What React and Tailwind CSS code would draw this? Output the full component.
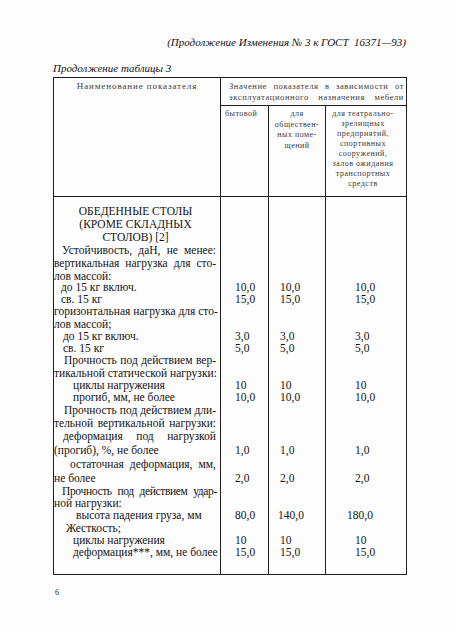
import React from "react";

const rows = [
  { t: "ОБЕДЕННЫЕ СТОЛЫ", h: "h-[13px]", c: "text-center pr-[3px]" },
  { t: "(КРОМЕ СКЛАДНЫХ", h: "h-[13px]", c: "text-center pr-[3px]" },
  { t: "СТОЛОВ) [2]", h: "h-[13px]", c: "text-center pr-[3px]" },
  { t: "Устойчивость, даН, не менее:", h: "h-[13px]", c: "pl-[8px] pr-[4px] text-justify [text-align-last:justify]" },
  { t: "вертикальная нагрузка для сто-", h: "h-[13px]", c: "pl-[0px] pr-[4px] text-justify [text-align-last:justify]" },
  { t: "лов массой:", h: "h-[12px]", c: "pl-[0px]" },
  { t: "до 15 кг включ.", h: "h-[11px]", c: "pl-[7px]", v: ["10,0", "10,0", "10,0"] },
  { t: "св. 15 кг", h: "h-[12px]", c: "pl-[7px]", v: ["15,0", "15,0", "15,0"] },
  { t: "горизонтальная нагрузка для сто-", h: "h-[13px]", c: "pl-[0px] pr-[4px] text-justify [text-align-last:justify]" },
  { t: "лов массой;", h: "h-[12px]", c: "pl-[0px]" },
  { t: "до 15 кг включ.", h: "h-[12px]", c: "pl-[9px]", v: ["3,0", "3,0", "3,0"] },
  { t: "св. 15 кг", h: "h-[12px]", c: "pl-[9px]", v: ["5,0", "5,0", "5,0"] },
  { t: "Прочность под действием вер-", h: "h-[13px]", c: "pl-[10px] pr-[4px] text-justify [text-align-last:justify]" },
  { t: "тикальной статической нагрузки:", h: "h-[12px]", c: "pl-[0px] pr-[4px] text-justify [text-align-last:justify]" },
  { t: "циклы нагружения", h: "h-[12px]", c: "pl-[19px]", v: ["10", "10", "10"] },
  { t: "прогиб, мм, не более", h: "h-[13px]", c: "pl-[19px] pr-[48px] text-justify [text-align-last:justify]", v: ["10,0", "10,0", "10,0"] },
  { t: "Прочность под действием дли-", h: "h-[13px]", c: "pl-[10px] pr-[4px] text-justify [text-align-last:justify]" },
  { t: "тельной вертикальной нагрузки:", h: "h-[13px]", c: "pl-[0px] pr-[4px] text-justify [text-align-last:justify]" },
  { t: "деформация под нагрузкой", h: "h-[13px]", c: "pl-[9px] pr-[4px] text-justify [text-align-last:justify]" },
  { t: "(прогиб), %, не более", h: "h-[14px]", c: "pl-[0px]", v: ["1,0", "1,0", "1,0"] },
  { t: "остаточная деформация, мм,", h: "h-[14px]", c: "pl-[16px] pr-[4px] text-justify [text-align-last:justify]" },
  { t: "не более", h: "h-[14px]", c: "pl-[0px]", v: ["2,0", "2,0", "2,0"] },
  { t: "Прочность под действием удар-", h: "h-[12px]", c: "pl-[8px] pr-[3px] tracking-[-0.35px] text-justify [text-align-last:justify]" },
  { t: "ной нагрузки:", h: "h-[12px]", c: "pl-[0px]" },
  { t: "высота падения груза, мм", h: "h-[13px]", c: "pl-[22px]", v: ["80,0", "140,0", "180,0"], wide: true },
  { t: "Жесткость;", h: "h-[12px]", c: "pl-[12px]" },
  { t: "циклы нагружения", h: "h-[12px]", c: "pl-[19px]", v: ["10", "10", "10"] },
  { t: "деформация***, мм, не более", h: "h-[12px]", c: "pl-[19px] pr-[3px] text-justify [text-align-last:justify]", v: ["15,0", "15,0", "15,0"] },
];

function Row({ r }) {
  const v = r.v || ["", "", ""];
  return (
    <div className={`grid grid-cols-[167px_48px_57px_80px] leading-[11px] ${r.h}`}>
      <div className="flex items-center border-r border-[#1e1e1e]">
        <div className={`w-full whitespace-nowrap ${r.c}`}>{r.t}</div>
      </div>
      <div className="flex items-center border-r border-[#1e1e1e] pl-[14px]">{v[0]}</div>
      <div className={`flex items-center border-r border-[#1e1e1e] ${r.wide ? "pl-[9px]" : "pl-[11px]"}`}>{v[1]}</div>
      <div className={`flex items-center ${r.wide ? "pl-[21px]" : "pl-[29px]"}`}>{v[2]}</div>
    </div>
  );
}

export default function App() {
  return (
    <div className="w-[457px] h-[630px] bg-[#fdfdfd] text-[#141414] font-['Liberation_Serif',serif] pl-[53px] pr-[51px] pt-[35px]">
      <div className="text-right italic text-[11px] leading-[14px] whitespace-pre">
        (Продолжение Изменения № 3 к ГОСТ  16371—93)
      </div>
      <div className="mt-[13px] italic text-[11px] leading-[13px]">Продолжение таблицы 3</div>

      <div className="mt-[2px] w-[354px] border border-[#1e1e1e] text-[11.5px]">
        {/* header */}
        <div className="grid grid-cols-[167px_185px] border-b border-[#1e1e1e] text-[8.5px] text-[#3a3a3a] tracking-[0.6px]">
          <div className="border-r border-[#1e1e1e] pt-[3px] text-center leading-[11px] text-[9px] tracking-[0.9px]">
            Наименование показателя
          </div>
          <div className="flex flex-col">
            <div className="h-[28px] border-b border-[#1e1e1e] pt-[3px] pl-[8px] pr-[2px] leading-[11px]">
              <div className="text-justify [text-align-last:justify]">Значение показателя в зависимости от</div>
              <div className="text-justify [text-align-last:justify]">эксплуатационного назначения мебели</div>
            </div>
            <div className="grid grid-cols-[48px_57px_80px] h-[90px] text-[8px] tracking-[0.5px]">
              <div className="border-r border-[#1e1e1e] pt-[3px] pl-[4px] leading-[10px]">бытовой</div>
              <div className="border-r border-[#1e1e1e] pt-[3px] text-center leading-[10.5px]">
                <div>для</div>
                <div>обществен-</div>
                <div>ных поме-</div>
                <div>щений</div>
              </div>
              <div className="pt-[3px] pr-[6px] text-center leading-[10px]">
                <div>для театрально-</div>
                <div>зрелищных</div>
                <div>предприятий,</div>
                <div>спортивных</div>
                <div>сооружений,</div>
                <div>залов ожидания</div>
                <div>транспортных</div>
                <div>средств</div>
              </div>
            </div>
          </div>
        </div>

        {/* body */}
        <div className="grid grid-cols-[167px_48px_57px_80px] h-[8px]">
          <div className="border-r border-[#1e1e1e]" />
          <div className="border-r border-[#1e1e1e]" />
          <div className="border-r border-[#1e1e1e]" />
          <div />
        </div>
        {rows.map((r, i) => (
          <Row key={i} r={r} />
        ))}
        <div className="grid grid-cols-[167px_48px_57px_80px] h-[16px]">
          <div className="border-r border-[#1e1e1e]" />
          <div className="border-r border-[#1e1e1e]" />
          <div className="border-r border-[#1e1e1e]" />
          <div />
        </div>
      </div>

      <div className="mt-[13px] ml-[2px] text-[8px] leading-[10px]">6</div>
    </div>
  );
}
